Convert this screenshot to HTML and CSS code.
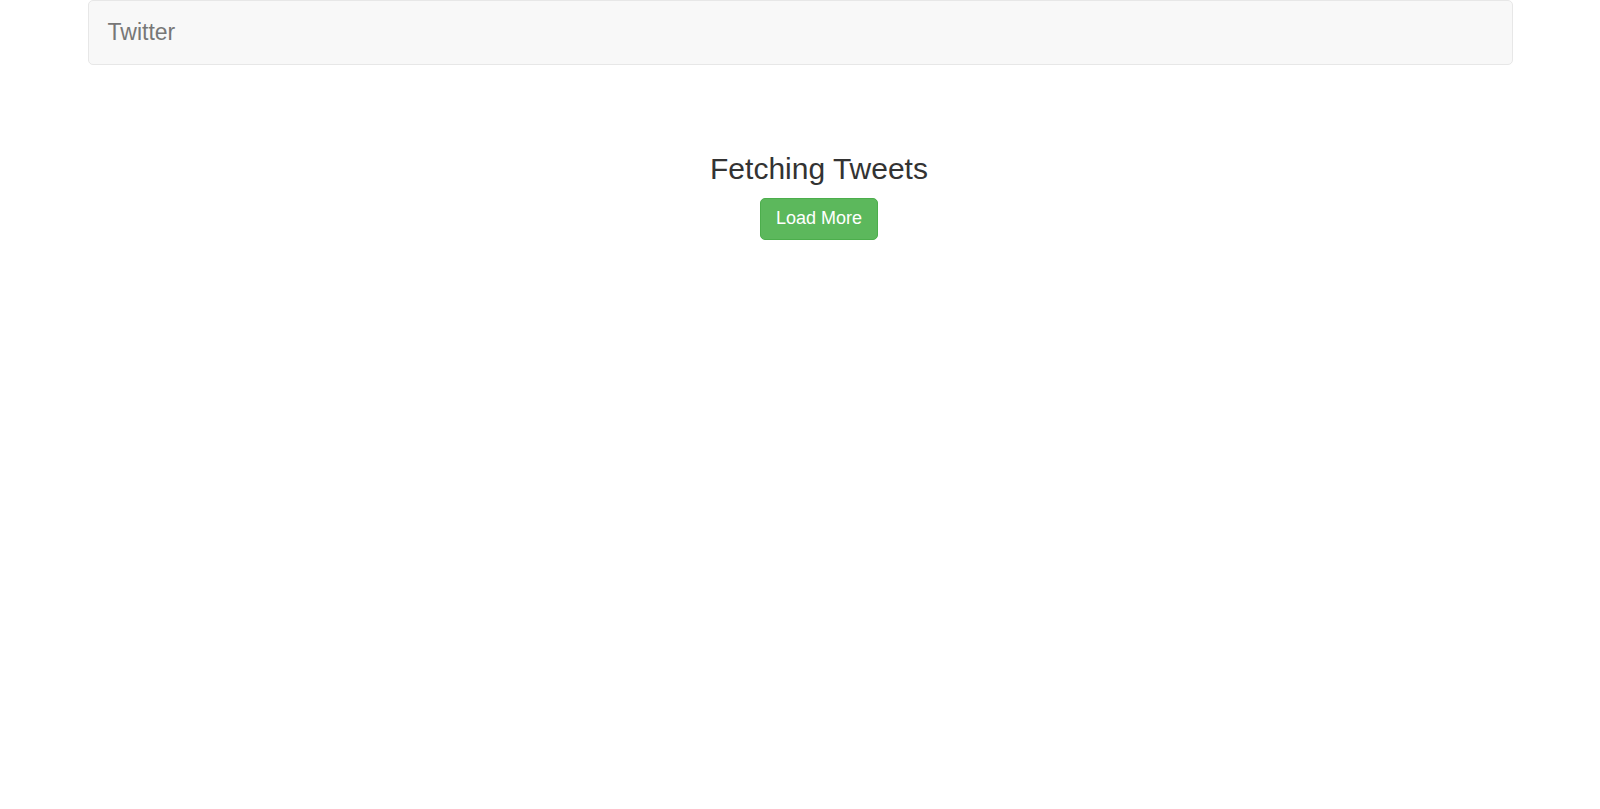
FILE: index.html
```html
<!DOCTYPE html>
<html lang="en">
<head>
<meta charset="utf-8">
<title>Twitter</title>
<link rel="stylesheet" href="styles.css">
</head>
<body>
<div class="container">
  <nav class="navbar"><a class="navbar-brand" href="#">Twitter</a></nav>
  <main class="feed">
    <h3 class="feed-title">Fetching Tweets</h3>
    <button class="btn" type="button">Load More</button>
  </main>
</div>
</body>
</html>
```
FILE: styles.css
```css
* { box-sizing: border-box; }
body {
  margin: 0;
  font-family: "Helvetica Neue", Helvetica, Arial, "Liberation Sans", sans-serif;
  font-size: 18px;
  line-height: 26px;
  color: #333;
  background: #fff;
}
.container {
  max-width: 1463px;
  margin: 0 auto;
  padding: 0 19px;
}
.navbar {
  display: flex;
  min-height: 65px;
  border: 1px solid #e7e7e7;
  border-radius: 5px;
  background: #f8f8f8;
}
.navbar-brand {
  padding: 19px;
  font-size: 23px;
  line-height: 25px;
  color: #777;
  text-decoration: none;
}
.feed {
  display: flex;
  flex-direction: column;
  align-items: center;
  gap: 12px;
  padding: 87px 0 0 38px;
}
.feed-title {
  margin: 0;
  font-size: 30px;
  font-weight: 500;
  line-height: 34px;
}
.btn {
  padding: 6px 15px 8px;
  border: 1px solid #4cae4c;
  border-radius: 5px;
  background: #5cb85c;
  color: #fff;
  font: inherit;
  cursor: pointer;
}
```
